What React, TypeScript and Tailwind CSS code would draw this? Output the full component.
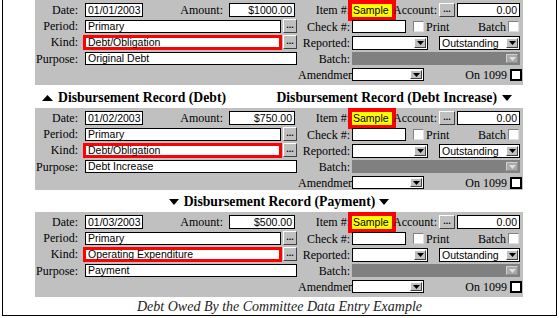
import React from "react";

const sans = "font-['Liberation_Sans',Arial,sans-serif]";
const serif = "font-['Liberation_Serif','Times_New_Roman',serif]";

type Rec = { date: string; amount: string; kind: string; purpose: string };

function Box({ className, children, right }: { className: string; children?: React.ReactNode; right?: boolean }) {
  return (
    <div
      className={`bg-white border border-black flex items-center px-[2px] text-[10.5px] leading-none whitespace-nowrap overflow-hidden text-black ${sans} ${right ? "justify-end" : ""} ${className}`}
    >
      {children}
    </div>
  );
}

function Dots({ className }: { className: string }) {
  return (
    <div
      className={`bg-[#c0c0c0] border border-t-white border-l-white border-r-[#404040] border-b-[#404040] flex items-end justify-center text-[9px] font-bold leading-none pb-[2px] text-black ${sans} ${className}`}
    >
      ...
    </div>
  );
}

function Arrow({ color }: { color: string }) {
  return (
    <svg width="7" height="4" viewBox="0 0 7 4">
      <path d="M0 0H7L3.5 4Z" fill={color} />
    </svg>
  );
}

function Drop({ className, value, disabled }: { className: string; value?: string; disabled?: boolean }) {
  return (
    <div className={`flex border ${disabled ? "border-[#808080] bg-[#808080]" : "border-black bg-white"} ${className}`}>
      <div className={`flex-1 px-[2px] flex items-center text-[10.5px] leading-none text-black ${sans}`}>{value}</div>
      <div
        className={`w-[12px] my-[1px] mr-[1px] border flex items-center justify-center ${
          disabled
            ? "bg-[#a8a8a8] border-t-[#d0d0d0] border-l-[#d0d0d0] border-r-[#909090] border-b-[#909090]"
            : "bg-[#c0c0c0] border-t-white border-l-white border-r-[#404040] border-b-[#404040]"
        }`}
      >
        <Arrow color={disabled ? "#e0e0e0" : "#000"} />
      </div>
    </div>
  );
}

function Lbl({ className, children }: { className: string; children: React.ReactNode }) {
  return <div className={`text-[12px] leading-none text-black whitespace-nowrap ${serif} ${className}`}>{children}</div>;
}

function Panel({ d, h }: { d: Rec; h: string }) {
  return (
    <div className={`bg-[#c0c0c0] flex ${h}`}>
      <div className="w-[262px] flex flex-col pt-[3px]">
        <div className="flex items-center h-[14px]">
          <Lbl className="w-[43px] text-right">Date:</Lbl>
          <Box className="ml-[7px] w-[58px] h-[14px]">{d.date}</Box>
          <Lbl className="w-[80px] text-right">Amount:</Lbl>
          <Box className="ml-[6px] w-[66px] h-[14px]" right>
            {d.amount}
          </Box>
        </div>
        <div className="flex items-center h-[14px] mt-[2px]">
          <Lbl className="w-[43px] text-right">Period:</Lbl>
          <Box className="ml-[7px] w-[196px] h-[13px]">Primary</Box>
          <Dots className="ml-[2px] w-[14px] h-[14px]" />
        </div>
        <div className="flex items-center h-[14px] mt-[2px]">
          <Lbl className="w-[43px] text-right">Kind:</Lbl>
          <div
            className={`ml-[5px] w-[199px] h-[15px] border-[3px] border-[#ff0000] bg-white flex items-center pl-[2px] text-[10.5px] leading-none text-black whitespace-nowrap ${sans}`}
          >
            {d.kind}
          </div>
          <Dots className="ml-[1px] w-[14px] h-[14px]" />
        </div>
        <div className="flex items-center h-[13px] mt-[3px]">
          <Lbl className="w-[43px] text-right">Purpose:</Lbl>
          <Box className="ml-[7px] w-[212px] h-[13px]">{d.purpose}</Box>
        </div>
      </div>
      <div className="ml-[1px] w-[225px] flex flex-col pt-[3px]">
        <div className="flex items-center h-[14px]">
          <Lbl className="w-[52px] text-right">Item #:</Lbl>
          <div
            className={`ml-[2px] w-[40px] h-[13px] bg-[#ffff00] outline-4 outline-[#ff0000] flex items-center pl-[1px] text-[10.5px] leading-none text-black ${sans}`}
          >
            Sample
          </div>
          <Lbl className="w-[45px] text-right">Account:</Lbl>
          <Dots className="ml-[2px] w-[16px] h-[14px]" />
          <Box className="ml-[2px] w-[63px] h-[14px]" right>
            0.00
          </Box>
        </div>
        <div className="flex items-center h-[13px] mt-[3px] pr-[4px]">
          <Lbl className="w-[52px] text-right">Check #:</Lbl>
          <Box className="ml-[2px] w-[54px] h-[13px]" />
          <div className="ml-[7px] w-[11px] h-[11px] bg-white border border-t-[#808080] border-l-[#808080] border-r-[#e0e0e0] border-b-[#e0e0e0]" />
          <Lbl className="ml-[2px]">Print</Lbl>
          <div className="flex-1" />
          <Lbl>Batch</Lbl>
          <div className="ml-[2px] w-[11px] h-[11px] bg-white border border-t-[#808080] border-l-[#808080] border-r-[#e0e0e0] border-b-[#e0e0e0]" />
        </div>
        <div className="flex items-center h-[14px] mt-[3px]">
          <Lbl className="w-[52px] text-right">Reported:</Lbl>
          <Drop className="ml-[2px] w-[76px] h-[14px]" />
          <Drop className="ml-[11px] w-[81px] h-[14px]" value="Outstanding" />
        </div>
        <div className="flex items-center h-[13px] mt-[2px]">
          <Lbl className="w-[52px] text-right">Batch:</Lbl>
          <Drop className="ml-[2px] w-[168px] h-[13px]" disabled />
        </div>
        <div className="flex items-center h-[13px] mt-[3px] pr-[1px]">
          <div className="w-[54px] overflow-hidden">
            <Lbl className="">Amendment:</Lbl>
          </div>
          <Drop className="w-[72px] h-[13px]" />
          <div className="flex-1" />
          <Lbl>On 1099</Lbl>
          <div className="ml-[3px] w-[12px] h-[12px] bg-white border-2 border-black" />
        </div>
      </div>
    </div>
  );
}

function Up() {
  return (
    <svg width="11" height="6" viewBox="0 0 11 6">
      <path d="M5.5 0L11 6H0Z" fill="#000" />
    </svg>
  );
}

function Down() {
  return (
    <svg width="10" height="6" viewBox="0 0 10 6">
      <path d="M0 0H10L5 6Z" fill="#000" />
    </svg>
  );
}

export default function App() {
  const recs: Rec[] = [
    { date: "01/01/2003", amount: "$1000.00", kind: "Debt/Obligation", purpose: "Original Debt" },
    { date: "01/02/2003", amount: "$750.00", kind: "Debt/Obligation", purpose: "Debt Increase" },
    { date: "01/03/2003", amount: "$500.00", kind: "Operating Expenditure", purpose: "Payment" },
  ];
  const head = `text-[13.7px] font-bold leading-none text-black whitespace-nowrap ${serif}`;
  return (
    <div className="w-[559px] h-[318px] bg-white overflow-hidden">
      <div className="ml-[2px] w-[555px] h-[316px] border-x border-b border-black flex flex-col">
        <div className="ml-[32px] w-[488px] flex flex-col">
          <Panel d={recs[0]} h="h-[85px]" />
          <div className="h-[23px] flex items-center justify-between pl-[7px] pr-[11px] pt-[3px]">
            <div className="flex items-center">
              <Up />
              <span className={`ml-[5px] ${head}`}>Disbursement Record (Debt)</span>
            </div>
            <div className="flex items-center">
              <span className={head}>Disbursement Record (Debt Increase)</span>
              <span className="ml-[5px]">
                <Down />
              </span>
            </div>
          </div>
          <Panel d={recs[1]} h="h-[82px]" />
          <div className="h-[22px] flex items-center justify-center pt-[2px]">
            <Down />
            <span className={`ml-[5px] ${head}`}>Disbursement Record (Payment)</span>
            <span className="ml-[4px]">
              <Down />
            </span>
          </div>
          <Panel d={recs[2]} h="h-[85px]" />
        </div>
        <div className={`flex-1 flex items-center justify-center pt-[1px] text-[14px] italic leading-none text-[#222] ${serif}`}>
          Debt Owed By the Committee Data Entry Example
        </div>
      </div>
    </div>
  );
}
